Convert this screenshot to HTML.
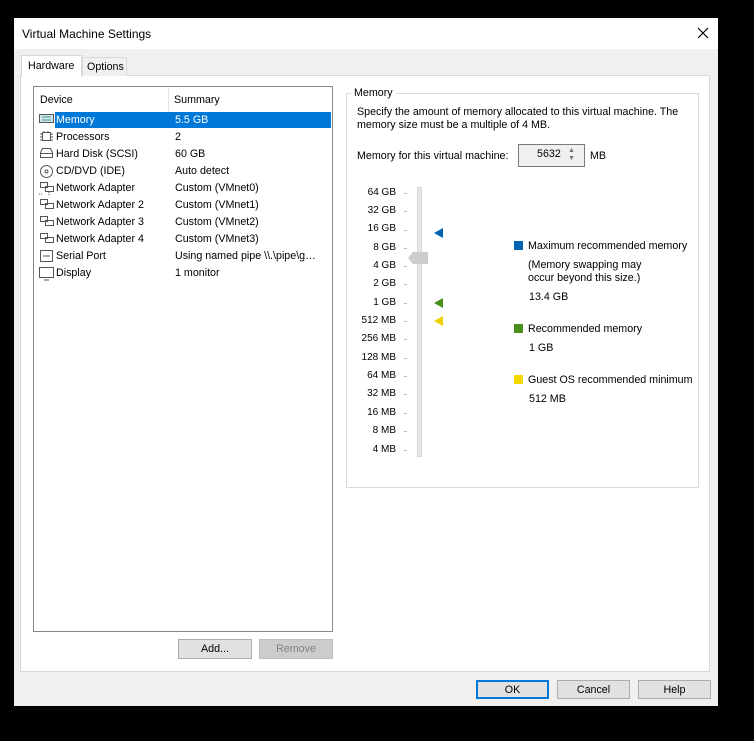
<!DOCTYPE html>
<html><head><meta charset="utf-8"><style>
*{margin:0;padding:0;box-sizing:border-box}
body{width:754px;height:741px;background:#000;position:relative;overflow:hidden;font-family:"Liberation Sans",sans-serif;font-size:10.7px;color:#000}
.a{position:absolute;white-space:nowrap}
.btn{position:absolute;background:#e1e1e1;border:1px solid #adadad;text-align:center;line-height:18px;font-size:10.7px}
.lbl{position:absolute;left:350px;width:46px;text-align:right;font-size:10px}
.tk{position:absolute;left:404px;width:3px;height:1px;background:#bbb}
</style></head><body>
<div class="a" style="left:14px;top:18px;width:704px;height:688px;background:#f0f0f0"></div>
<div class="a" style="left:14px;top:18px;width:704px;height:31px;background:#fff"></div>
<div class="a" style="left:22px;top:27px;font-size:12px">Virtual Machine Settings</div>
<svg class="a" style="left:697px;top:27px" width="12" height="12"><path d="M1 1L11 11M11 1L1 11" stroke="#000" stroke-width="1.2"/></svg>
<div class="a" style="left:20px;top:75px;width:690px;height:597px;background:#fff;border:1px solid #d9d9d9"></div>
<div class="a" style="left:21px;top:55px;width:61px;height:22px;background:#fff;border:1px solid #d9d9d9;border-bottom:none;padding:4px 0 0 6px">Hardware</div>
<div class="a" style="left:82px;top:57px;width:45px;height:19px;background:#f0f0f0;border:1px solid #d9d9d9;border-bottom:none;padding:3px 0 0 4px">Options</div>
<div class="a" style="left:33px;top:86px;width:300px;height:546px;border:1px solid #828790;background:#fff"></div>
<div class="a" style="left:168px;top:88px;width:1px;height:24px;background:#e5e5e5"></div>
<div class="a" style="left:40px;top:94px">Device</div>
<div class="a" style="left:174px;top:94px">Summary</div>
<div class="a" style="left:55px;top:112px;width:276px;height:16px;background:#0078d7"></div>
<div class="a" style="left:56px;top:114px;color:#fff">Memory</div><div class="a" style="left:175px;top:114px;color:#fff">5.5 GB</div>
<div class="a" style="left:56px;top:131px">Processors</div><div class="a" style="left:175px;top:131px">2</div>
<div class="a" style="left:56px;top:148px">Hard Disk (SCSI)</div><div class="a" style="left:175px;top:148px">60 GB</div>
<div class="a" style="left:56px;top:165px">CD/DVD (IDE)</div><div class="a" style="left:175px;top:165px">Auto detect</div>
<div class="a" style="left:56px;top:182px">Network Adapter</div><div class="a" style="left:175px;top:182px">Custom (VMnet0)</div>
<div class="a" style="left:56px;top:199px">Network Adapter 2</div><div class="a" style="left:175px;top:199px">Custom (VMnet1)</div>
<div class="a" style="left:56px;top:216px">Network Adapter 3</div><div class="a" style="left:175px;top:216px">Custom (VMnet2)</div>
<div class="a" style="left:56px;top:233px">Network Adapter 4</div><div class="a" style="left:175px;top:233px">Custom (VMnet3)</div>
<div class="a" style="left:56px;top:250px">Serial Port</div><div class="a" style="left:175px;top:250px">Using named pipe \\.\pipe\g…</div>
<div class="a" style="left:56px;top:267px">Display</div><div class="a" style="left:175px;top:267px">1 monitor</div>
<svg class="a" style="left:39px;top:113px" width="16" height="170" fill="none" stroke="#555">
<rect x="0.5" y="1.5" width="14" height="8" fill="#cfe3f5"/><path d="M3 4h9M3 7h9" stroke="#4a7"/>
<rect x="3.5" y="19.5" width="8" height="8"/><path d="M1 21h2M1 24h2M1 27h2M12 21h2M12 24h2M12 27h2M5 18v1M9 18v1" />
<path d="M1.5 44.5v-5l2-4h8l2 4v5z"/><path d="M1.5 40.5h12"/>
<circle cx="7.5" cy="58.5" r="6"/><circle cx="7.5" cy="58.5" r="1.5"/>
<rect x="1.5" y="69.5" width="7" height="5"/><rect x="6.5" y="73.5" width="8" height="5"/><path d="M10 79v3M0 81h3" stroke-dasharray="1 1"/>
<rect x="1.5" y="86.5" width="7" height="5"/><rect x="6.5" y="90.5" width="8" height="5"/>
<rect x="1.5" y="103.5" width="7" height="5"/><rect x="6.5" y="107.5" width="8" height="5"/>
<rect x="1.5" y="120.5" width="7" height="5"/><rect x="6.5" y="124.5" width="8" height="5"/>
<rect x="1.5" y="137.5" width="12" height="11"/><path d="M4 143h7"/>
<rect x="0.5" y="154.5" width="14" height="10"/><path d="M5 167h5"/>
</svg>
<div class="btn" style="left:178px;top:639px;width:74px;height:20px">Add...</div>
<div class="btn" style="left:259px;top:639px;width:74px;height:20px;background:#ccc;border-color:#bfbfbf;color:#838383">Remove</div>
<div class="a" style="left:346px;top:93px;width:353px;height:395px;border:1px solid #dcdcdc"></div>
<div class="a" style="left:351px;top:87px;background:#fff;padding:0 3px">Memory</div>
<div class="a" style="left:357px;top:106px;line-height:13px">Specify the amount of memory allocated to this virtual machine. The<br>memory size must be a multiple of 4 MB.</div>
<div class="a" style="left:357px;top:150px">Memory for this virtual machine:</div>
<div class="a" style="left:518px;top:144px;width:67px;height:23px;border:1px solid #7a7a7a;background:#f0f0f0"></div>
<div class="a" style="left:537px;top:148px">5632</div>
<div class="a" style="left:568px;top:147px;font-size:7px;color:#777;line-height:8px">▲<br>▼</div>
<div class="a" style="left:590px;top:150px">MB</div>
<div class="a" style="left:417px;top:187px;width:5px;height:270px;background:#e7e7e7;border:1px solid #d6d6d6"></div>
<svg class="a" style="left:408px;top:251px" width="21" height="14"><path d="M0 7L5 1H20V13H5z" fill="#cdcdcd"/></svg>
<div class="lbl" style="top:187px">64 GB</div><div class="tk" style="top:193px"></div>
<div class="lbl" style="top:205px">32 GB</div><div class="tk" style="top:211px"></div>
<div class="lbl" style="top:223px">16 GB</div><div class="tk" style="top:230px"></div>
<div class="lbl" style="top:242px">8 GB</div><div class="tk" style="top:248px"></div>
<div class="lbl" style="top:260px">4 GB</div><div class="tk" style="top:266px"></div>
<div class="lbl" style="top:278px">2 GB</div><div class="tk" style="top:284px"></div>
<div class="lbl" style="top:297px">1 GB</div><div class="tk" style="top:303px"></div>
<div class="lbl" style="top:315px">512 MB</div><div class="tk" style="top:321px"></div>
<div class="lbl" style="top:333px">256 MB</div><div class="tk" style="top:339px"></div>
<div class="lbl" style="top:352px">128 MB</div><div class="tk" style="top:358px"></div>
<div class="lbl" style="top:370px">64 MB</div><div class="tk" style="top:376px"></div>
<div class="lbl" style="top:388px">32 MB</div><div class="tk" style="top:394px"></div>
<div class="lbl" style="top:407px">16 MB</div><div class="tk" style="top:413px"></div>
<div class="lbl" style="top:425px">8 MB</div><div class="tk" style="top:431px"></div>
<div class="lbl" style="top:444px">4 MB</div><div class="tk" style="top:450px"></div>
<svg class="a" style="left:434px;top:227px" width="10" height="100">
<path d="M0 6L9 1V11z" fill="#0063b1"/><path d="M0 76L9 71V81z" fill="#4a8e1d"/><path d="M0 94L9 89V99z" fill="#f0d000"/></svg>
<div class="a" style="left:514px;top:241px;width:9px;height:9px;background:#0063b1"></div>
<div class="a" style="left:528px;top:240px">Maximum recommended memory</div>
<div class="a" style="left:528px;top:259px;line-height:13px">(Memory swapping may<br>occur beyond this size.)</div>
<div class="a" style="left:529px;top:291px">13.4 GB</div>
<div class="a" style="left:514px;top:324px;width:9px;height:9px;background:#4a8e1d"></div>
<div class="a" style="left:528px;top:323px">Recommended memory</div>
<div class="a" style="left:529px;top:342px">1 GB</div>
<div class="a" style="left:514px;top:375px;width:9px;height:9px;background:#f5d800"></div>
<div class="a" style="left:528px;top:374px">Guest OS recommended minimum</div>
<div class="a" style="left:529px;top:393px">512 MB</div>
<div class="btn" style="left:476px;top:680px;width:73px;height:19px;border:2px solid #0078d7;line-height:16px">OK</div>
<div class="btn" style="left:557px;top:680px;width:73px;height:19px">Cancel</div>
<div class="btn" style="left:638px;top:680px;width:73px;height:19px">Help</div>
</body></html>
